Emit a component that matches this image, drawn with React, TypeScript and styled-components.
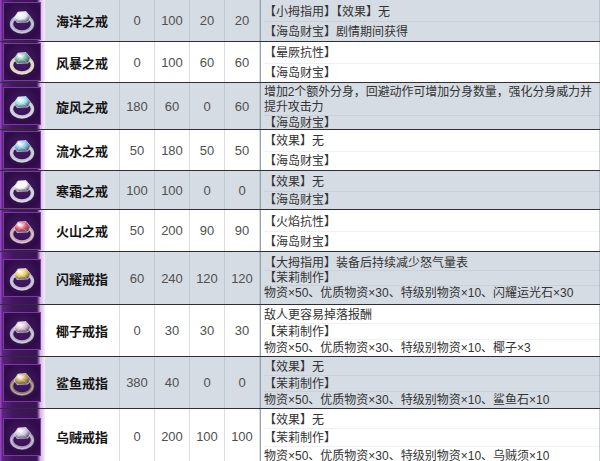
import React from 'react';
import styled, { createGlobalStyle } from 'styled-components';

const GlobalStyle = createGlobalStyle`
  html, body {
    margin: 0;
    padding: 0;
    background: #ffffff;
    overflow: hidden;
  }
  body {
    font-family: "Liberation Sans", "Noto Sans CJK SC", sans-serif;
  }
`;

interface Ring {
  name: string;
  stats: number[];
  lines: string[];
  height: number;
  gem: string;
  band: string;
  compact?: boolean;
  wrapFirst?: boolean;
}

const rings: Ring[] = [
  { name: '海洋之戒', stats: [0, 100, 20, 20], lines: ['【小拇指用】【效果】无', '【海岛财宝】剧情期间获得'], height: 42, gem: '#dfe6f2', band: '#a8aebe' },
  { name: '风暴之戒', stats: [0, 100, 60, 60], lines: ['【晕厥抗性】', '【海岛财宝】'], height: 41, gem: '#6fb7a3', band: '#d9d2b8' },
  { name: '旋风之戒', stats: [180, 60, 0, 60], lines: ['增加2个额外分身，回避动作可增加分身数量，强化分身威力并\n提升攻击力', '【海岛财宝】'], height: 47, gem: '#8fe0e6', band: '#c4c8d6', wrapFirst: true },
  { name: '流水之戒', stats: [50, 180, 50, 50], lines: ['【效果】无', '【海岛财宝】'], height: 41, gem: '#7cc0ea', band: '#b9c0cc' },
  { name: '寒霜之戒', stats: [100, 100, 0, 0], lines: ['【效果】无', '【海岛财宝】'], height: 39, gem: '#f4f4fa', band: '#c8c8d8' },
  { name: '火山之戒', stats: [50, 200, 90, 90], lines: ['【火焰抗性】', '【海岛财宝】'], height: 42, gem: '#d8506a', band: '#c6a0b0' },
  { name: '闪耀戒指', stats: [60, 240, 120, 120], lines: ['【大拇指用】装备后持续减少怒气量表', '【茉莉制作】', '物资×50、优质物资×30、特级别物资×10、闪耀运光石×30'], height: 53, gem: '#e8c84a', band: '#bcb6cc', compact: true },
  { name: '椰子戒指', stats: [0, 30, 30, 30], lines: ['敌人更容易掉落报酬', '【茉莉制作】', '物资×50、优质物资×30、特级别物资×10、椰子×3'], height: 52, gem: '#d8b8d0', band: '#b6aec4' },
  { name: '鲨鱼戒指', stats: [380, 40, 0, 0], lines: ['【效果】无', '【茉莉制作】', '物资×50、优质物资×30、特级别物资×10、鲨鱼石×10'], height: 52, gem: '#c89a48', band: '#8a7a6a' },
  { name: '乌贼戒指', stats: [0, 200, 100, 100], lines: ['【效果】无', '【茉莉制作】', '物资×50、优质物资×30、特级别物资×10、乌贼须×10'], height: 56, gem: '#cfc2e0', band: '#a89cba' },
];

// small ring drawing: band seen at an angle with a stone on top
const RingIcon = ({ gem, band }: { gem: string; band: string }) => {
  const id = `g${gem.slice(1)}`;
  return (
    <svg width="30" height="30" viewBox="0 0 30 30">
      <defs>
        <radialGradient id={id} cx="38%" cy="32%" r="70%">
          <stop offset="0%" stopColor="#ffffff" />
          <stop offset="55%" stopColor={gem} />
          <stop offset="100%" stopColor="#4a4a5a" />
        </radialGradient>
      </defs>
      <ellipse cx="15" cy="18" rx="10.5" ry="8" fill="none" stroke={band} strokeWidth="3.5" />
      <ellipse cx="15" cy="18.5" rx="10.5" ry="8" fill="none" stroke="#f2f2f6" strokeWidth="0.8" opacity="0.7" />
      <path d="M7 12 L11 6 L19 5.5 L23.5 11 L21 16 L10 16.5 Z" fill={`url(#${id})`} stroke="#f4f4f8" strokeWidth="0.6" />
      <path d="M11 6 L14 11 L19 5.5 M14 11 L10 16.5 M14 11 L21 16" fill="none" stroke="#ffffff" strokeWidth="0.5" opacity="0.6" />
      <circle cx="12" cy="8.5" r="1.3" fill="#ffffff" opacity="0.9" />
    </svg>
  );
};

const App = () => {
  return (
    <>
      <GlobalStyle />
      <Table>
        {rings.map((r, i) => (
          <Row key={r.name} height={r.height} shaded={i % 2 === 0}>
            <IconCell>
              <IconBox>
                <RingIcon gem={r.gem} band={r.band} />
              </IconBox>
            </IconCell>
            <NameCell>{r.name}</NameCell>
            {r.stats.map((s, k) => (
              <NumCell key={k}>{s}</NumCell>
            ))}
            <DescCell compact={r.compact}>
              {r.lines.map((l, k) => (
                <DescLine key={k} wrap={r.wrapFirst && k === 0} compact={r.compact}>
                  {l}
                </DescLine>
              ))}
            </DescCell>
          </Row>
        ))}
      </Table>
    </>
  );
};

export default App;

const Table = styled.div`
  width: 600px;
  height: 461px;
  overflow: hidden;
  display: flex;
  flex-direction: column;
`;

const Row = styled.div<{ height: number; shaded: boolean }>`
  height: ${({ height }) => height}px;
  flex-shrink: 0;
  box-sizing: border-box;
  display: grid;
  grid-template-columns: 45px 75px 35px 35px 35px 35px 1fr;
  background-color: ${({ shaded }) => (shaded ? '#d6dce3' : '#ffffff')};
  border-bottom: 1px solid #2e2e33;
`;

const IconCell = styled.div`
  display: flex;
  align-items: center;
  padding-left: 3px;
  background: linear-gradient(to right, #9a4fc4 0, #5a2280 6%, #42165e 30%, #3c1356 82%, #d9b6e8 90%, #f6eef9 100%);
`;

const IconBox = styled.div`
  width: 38px;
  height: 38px;
  display: flex;
  align-items: center;
  justify-content: center;
  box-sizing: border-box;
  border: 1px solid #7a3aa0;
  background: radial-gradient(circle at 50% 45%, #4a1d6e 0, #2e0c46 70%, #3a1256 100%);
`;

const NameCell = styled.div`
  display: flex;
  align-items: center;
  justify-content: center;
  font-family: "Noto Sans CJK SC", sans-serif;
  font-weight: 700;
  font-size: 13px;
  color: #141414;
  border-right: 1px solid rgba(150, 160, 172, 0.35);
`;

const NumCell = styled.div`
  display: flex;
  align-items: center;
  justify-content: center;
  font-size: 13px;
  color: #505050;
  border-right: 1px solid rgba(150, 160, 172, 0.35);
`;

const DescCell = styled.div<{ compact?: boolean }>`
  min-width: 0;
  display: flex;
  flex-direction: column;
  justify-content: center;
  padding: ${({ compact }) => (compact ? '4px 0 4px 3px' : '2px 0 0 3px')};
  border-left: 1px solid #9aa2ae;
  box-shadow: inset -4px 0 0 -3px rgba(150, 160, 172, 0.45);
  font-size: 12px;
  color: #333333;
  overflow: hidden;
`;

const DescLine = styled.div<{ wrap?: boolean; compact?: boolean }>`
  flex: ${({ wrap }) => (wrap ? '0 0 auto' : '1 1 0')};
  display: flex;
  align-items: center;
  line-height: ${({ wrap, compact }) => (wrap ? '15px' : compact ? '13px' : '14px')};
  white-space: ${({ wrap }) => (wrap ? 'pre' : 'nowrap')};
  letter-spacing: ${({ wrap }) => (wrap ? '-0.1px' : '0')};
  & + & {
    border-top: 1px solid rgba(120, 130, 145, 0.12);
  }
`;
